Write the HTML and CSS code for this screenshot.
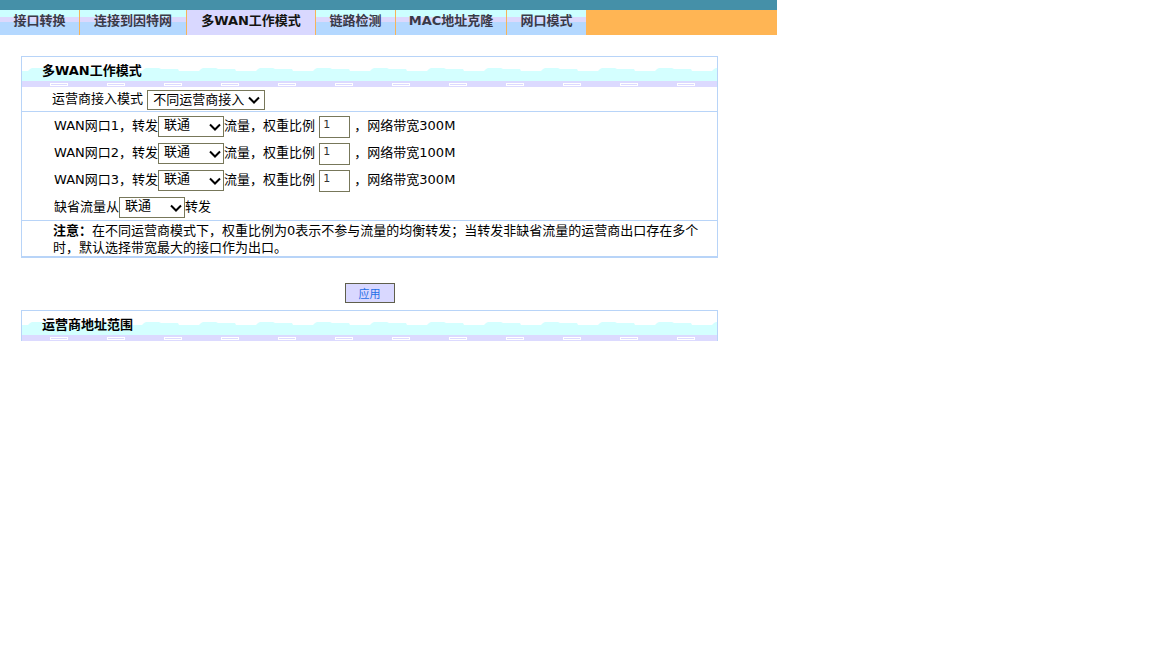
FILE: index.html
```html
<!DOCTYPE html>
<html lang="zh-CN">
<head>
<meta charset="utf-8">
<title>多WAN工作模式</title>
<link rel="stylesheet" href="styles.css">
</head>
<body>
<div class="page">
  <div class="topbar"></div>
  <div class="tabs">
    <a class="tab t1">接口转换</a>
    <a class="tab t2">连接到因特网</a>
    <a class="tab t3 active">多WAN工作模式</a>
    <a class="tab t4">链路检测</a>
    <a class="tab t5">MAC地址克隆</a>
    <a class="tab t6">网口模式</a>
    <div class="tab-fill"></div>
  </div>

  <div class="panel">
    <div class="panel-head">多WAN工作模式</div>
    <div class="row-mode">运营商接入模式 <select class="sel sel-mode"><option>不同运营商接入</option></select></div>
    <div class="group">
      <div class="line">WAN网口1，转发<select class="sel sel-isp"><option>联通</option></select>流量，权重比例 <input class="weight" type="text" value="1"> ，网络带宽300M</div>
      <div class="line">WAN网口2，转发<select class="sel sel-isp"><option>联通</option></select>流量，权重比例 <input class="weight" type="text" value="1"> ，网络带宽100M</div>
      <div class="line">WAN网口3，转发<select class="sel sel-isp"><option>联通</option></select>流量，权重比例 <input class="weight" type="text" value="1"> ，网络带宽300M</div>
      <div class="line">缺省流量从<select class="sel sel-isp"><option>联通</option></select>转发</div>
    </div>
    <div class="note"><b class="note-label">注意：</b><span>在不同运营商模式下，权重比例为0表示不参与流量的均衡转发；当转发非缺省流量的运营商出口存在多个</span><br><span>时，默认选择带宽最大的接口作为出口。</span></div>
  </div>

  <div class="actions"><button class="apply" type="button">应用</button></div>

  <div class="panel panel-open">
    <div class="panel-head">运营商地址范围</div>
  </div>
</div>
</body>
</html>
```
FILE: styles.css
```css
* { box-sizing: border-box; }
html, body { margin: 0; padding: 0; background: #fff; }
body {
  font-family: "DejaVu Sans", "Noto Sans CJK SC", sans-serif;
  font-size: 13px;
  color: #000;
}
.page { width: 777px; }

.topbar { height: 10px; background: #4590a8; }

.tabs { display: flex; height: 25px; }
.tab {
  display: block;
  height: 25px;
  line-height: 21px;
  text-align: center;
  font-weight: bold;
  font-size: 13px;
  color: #3a3a48;
  border-right: 1px solid #f5b45a;
  background: linear-gradient(to bottom, #ccffff 0, #ccffff 7px, #dcd8fc 7px, #dcd8fc 12px, #b4d8ff 12px);
  white-space: nowrap;
}
.tab.active { background: #d9d8ff; color: #141410; }
.t1 { width: 80px; }
.t2 { width: 107px; }
.t3 { width: 129px; }
.t4 { width: 80px; }
.t5 { width: 111px; }
.t6 { width: 79px; border-right: none; }
.tab-fill { flex: 1; background: #ffb554; }

.panel {
  margin: 21px 0 0 21px;
  width: 697px;
  border: 1px solid #b8d4f8;
  border-bottom-width: 2px;
}
.panel-head {
  height: 30px;
  padding-left: 20px;
  padding-bottom: 2px;
  line-height: 28px;
  font-weight: bold;
  background-color: #fff;
  background-image: url("data:image/svg+xml;utf8,<svg xmlns='http://www.w3.org/2000/svg' width='57' height='30'><rect width='57' height='30' fill='white'/><path d='M0 14 L2 12 L4 11 L17 11 L19 12 L36 12 L37 14 L57 14 L57 24 L0 24 Z' fill='%23d4ffff'/><rect y='24' width='57' height='6' fill='%23dcdaff'/><rect x='22.5' y='26.5' width='17' height='2' fill='none' stroke='white'/></svg>");
  background-repeat: repeat-x;
  background-position: 6px 0;
}

.row-mode {
  height: 25px;
  line-height: 24px;
  padding-left: 30px;
  border-bottom: 1px solid #b8d4f8;
  white-space: nowrap;
}
.group {
  padding-left: 32px;
  border-bottom: 1px solid #b8d4f8;
}
.line {
  height: 27px;
  line-height: 27px;
  white-space: nowrap;
}

.sel {
  -webkit-appearance: none;
  appearance: none;
  font-family: "DejaVu Sans", "Noto Sans CJK SC", sans-serif;
  font-size: 13px;
  color: #000;
  background-color: #fff;
  background-image: url("data:image/svg+xml;utf8,<svg xmlns='http://www.w3.org/2000/svg' width='12' height='8'><path d='M1 1.5 L6 6.5 L11 1.5' fill='none' stroke='black' stroke-width='2'/></svg>");
  background-repeat: no-repeat;
  border: 1px solid #77775a;
  border-radius: 0;
  margin: 0;
  vertical-align: middle;
}
.sel-mode {
  width: 118px;
  height: 20px;
  padding: 0 0 0 5px;
  line-height: 18px;
  background-position: right 4px center;
}
.sel-isp {
  width: 66px;
  height: 21px;
  padding: 0 0 4px 5px;
  line-height: 15px;
  background-position: right 2px center;
}

.weight {
  width: 31px;
  height: 22px;
  margin: 0;
  padding: 0 2px 4px 3px;
  border: 1px solid #77775a;
  border-radius: 0;
  font-family: "DejaVu Sans", sans-serif;
  font-size: 11px;
  color: #333;
  vertical-align: middle;
  background: #fff;
}

.note {
  padding: 1px 8px 0 31px;
  line-height: 17px;
  white-space: nowrap;
}
.note-label { font-weight: bold; }

.actions {
  width: 697px;
  margin-left: 21px;
  padding-top: 25px;
  display: flex;
  justify-content: center;
}
.apply {
  width: 50px;
  height: 20px;
  margin: 0;
  padding: 0;
  background: #d9d8ff;
  border: 1px solid #5f5f4c;
  border-radius: 0;
  color: #1e6ee6;
  font-family: "Noto Sans CJK SC", sans-serif;
  font-size: 11px;
  line-height: 18px;
}

.panel-open {
  margin-top: 7px;
  border-bottom: none;
}
```
